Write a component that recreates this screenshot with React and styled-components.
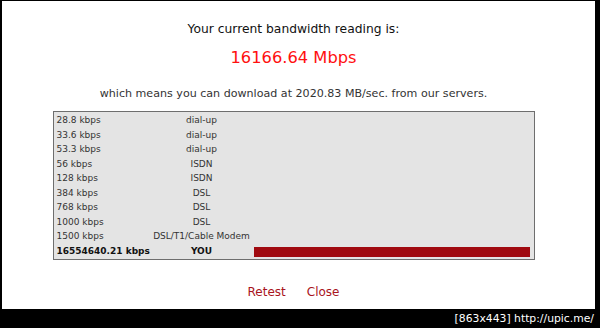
import React from "react";
import styled, { createGlobalStyle } from "styled-components";

const Global = createGlobalStyle`
  html, body { margin: 0; padding: 0; background: #000; }
  body { font-family: "DejaVu Sans", Verdana, sans-serif; }
`;

const Frame = styled.div`
  width: 600px;
  height: 328px;
  background: #000;
  display: flex;
  flex-direction: column;
  overflow: hidden;
`;

const Panel = styled.div`
  margin: 1px 5px 0 2px;
  height: 308px;
  background: #fff;
  box-sizing: border-box;
  padding: 20px 10px 0 0;
  display: flex;
  flex-direction: column;
  align-items: center;
`;

const Heading = styled.div`
  font-size: 12.3px;
  line-height: 16px;
  color: #111;
`;

const Speed = styled.div`
  margin-top: 11px;
  font-size: 16.3px;
  line-height: 20px;
  color: #ff1010;
`;

const Note = styled.div`
  margin-top: 19px;
  font-size: 11.1px;
  line-height: 14px;
  color: #333;
`;

const Table = styled.div`
  margin-top: 10px;
  width: 482px;
  box-sizing: border-box;
  border: 1px solid #6e6e6e;
  background: #e4e4e4;
  padding: 1px 4px 1px 3px;
  display: grid;
  grid-template-columns: 93px 104px 1fr;
  grid-auto-rows: 14.5px;
  font-size: 9px;
  color: #222;
`;

const Cell = styled.div`
  display: flex;
  align-items: center;
  justify-content: ${(p) => (p.$center ? "center" : "flex-start")};
  font-weight: ${(p) => (p.$bold ? "bold" : "normal")};
  color: ${(p) => (p.$bold ? "#111" : "#333")};
  white-space: nowrap;
`;

const Bar = styled.div`
  height: 10px;
  width: 100%;
  margin-top: 2px;
  background: #a00a10;
`;

const Links = styled.div`
  margin-top: 24px;
  display: flex;
  gap: 21px;
  font-size: 12px;
  line-height: 16px;
`;

const LinkText = styled.span`
  color: #a8141c;
  cursor: pointer;
`;

const Footer = styled.div`
  height: 19px;
  display: flex;
  align-items: center;
  justify-content: flex-end;
  padding-right: 6px;
  color: #fff;
  font-size: 10.8px;
  font-family: "DejaVu Sans", sans-serif;
`;

const rows = [
  ["28.8 kbps", "dial-up"],
  ["33.6 kbps", "dial-up"],
  ["53.3 kbps", "dial-up"],
  ["56 kbps", "ISDN"],
  ["128 kbps", "ISDN"],
  ["384 kbps", "DSL"],
  ["768 kbps", "DSL"],
  ["1000 kbps", "DSL"],
  ["1500 kbps", "DSL/T1/Cable Modem"],
];

export default function App() {
  return (
    <>
      <Global />
      <Frame>
        <Panel>
          <Heading>Your current bandwidth reading is:</Heading>
          <Speed>16166.64 Mbps</Speed>
          <Note>which means you can download at 2020.83 MB/sec. from our servers.</Note>
          <Table>
            {rows.map(([s, t]) => (
              <React.Fragment key={s}>
                <Cell>{s}</Cell>
                <Cell $center>{t}</Cell>
                <Cell />
              </React.Fragment>
            ))}
            <Cell $bold>16554640.21 kbps</Cell>
            <Cell $bold $center>YOU</Cell>
            <Cell>
              <Bar />
            </Cell>
          </Table>
          <Links>
            <LinkText>Retest</LinkText>
            <LinkText>Close</LinkText>
          </Links>
        </Panel>
        <Footer>[863x443] http://upic.me/</Footer>
      </Frame>
    </>
  );
}
